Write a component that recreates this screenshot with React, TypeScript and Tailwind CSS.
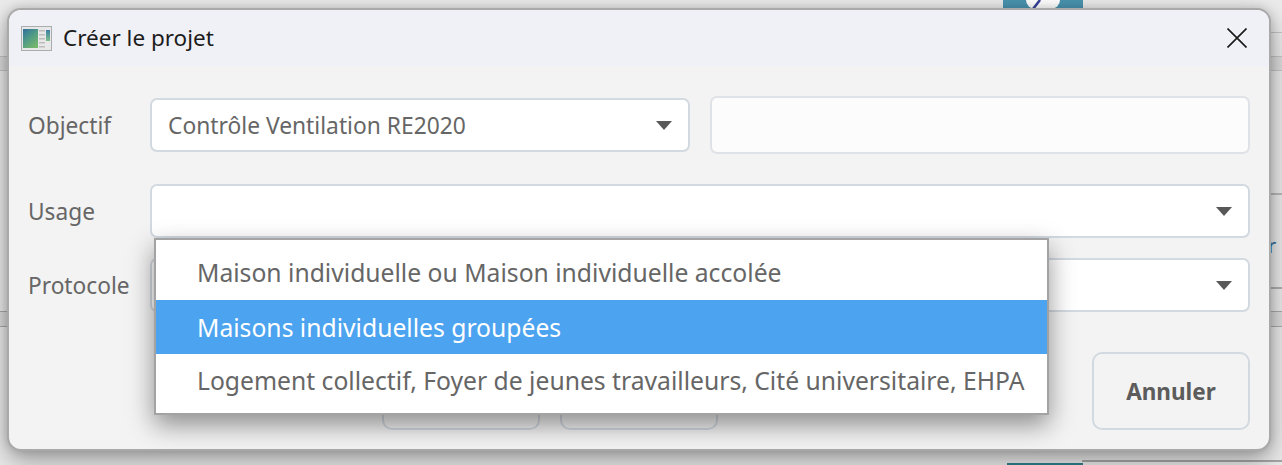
const FONT = "font-['Noto_Sans','Open_Sans',sans-serif]";

const Caret = () => (
  <svg width="16" height="9" viewBox="0 0 16 9" className="shrink-0">
    <path d="M0 0H16L8 9Z" fill="#585858" />
  </svg>
);

const AppIcon = () => (
  <svg width="31" height="25" viewBox="0 0 31 25" className="shrink-0">
    <defs>
      <linearGradient id="pane" x1="0" y1="0" x2="0.7" y2="1">
        <stop offset="0" stopColor="#2f6f9c" />
        <stop offset="0.5" stopColor="#4f9a86" />
        <stop offset="1" stopColor="#74b66c" />
      </linearGradient>
      <linearGradient id="side" x1="0" y1="0" x2="0" y2="1">
        <stop offset="0" stopColor="#3d7fa8" />
        <stop offset="1" stopColor="#7fc08a" />
      </linearGradient>
    </defs>
    <rect x="0.5" y="0.5" width="30" height="24" fill="#e8e8e8" stroke="#a9adad" />
    <rect x="2" y="3" width="15" height="19" fill="url(#pane)" />
    <rect x="18" y="4" width="6" height="1.5" fill="#bdbdbd" />
    <rect x="18" y="8" width="6" height="1.5" fill="#bdbdbd" />
    <rect x="18" y="12" width="6" height="1.5" fill="#bdbdbd" />
    <rect x="18" y="16" width="6" height="1.5" fill="#bdbdbd" />
    <rect x="18" y="20" width="6" height="1.5" fill="#bdbdbd" />
    <rect x="25" y="4" width="4" height="11" fill="url(#side)" />
  </svg>
);

const Label = ({ children }: { children: string }) => (
  <span className="w-[122px] shrink-0 pt-[2px] text-[22.7px] leading-none text-[#666]">{children}</span>
);

const menuItems = [
  "Maison individuelle ou Maison individuelle accolée",
  "Maisons individuelles groupées",
  "Logement collectif, Foyer de jeunes travailleurs, Cité universitaire, EHPA",
];

export default function App() {
  return (
    <div className={`relative h-[465px] w-[1282px] overflow-hidden bg-[#ebebeb] pl-[7px] pt-[8px] ${FONT}`}>
      {/* app behind the dialog */}
      <div className="absolute left-0 top-[56px] h-[15px] w-full border-y border-[#c4c5c4] bg-[#00000010]" />
      <div className="absolute left-0 top-[311px] h-[16px] w-full border-y border-[#a9aaa9] bg-[#00000010]" />
      <div className="absolute right-0 top-[32px] h-px w-[12px] bg-[#c4c5c8]" />
      <div className="absolute right-0 top-[193px] h-[2px] w-[12px] bg-[#b8b9bb]" />
      <div className="absolute right-0 top-[287px] h-[2px] w-[12px] bg-[#aeafb1]" />
      <div className="absolute right-0 top-[460px] h-[2px] w-[200px] bg-[#a5a6a6]" />
      <span className="absolute left-[1268px] top-[236px] text-[20px] leading-none text-[#2f6f9c]">r</span>
      <div className="absolute left-[1003px] top-0 flex h-[9px] w-[80px] justify-center bg-[#4a94b0]">
        <div className="relative h-[9px] w-[34px] rounded-b-full bg-white">
          <svg width="34" height="9" viewBox="0 0 34 9" className="absolute inset-0">
            <path d="M14 0L7 9" stroke="#35419a" strokeWidth="2.5" />
          </svg>
        </div>
      </div>
      <div className="absolute bottom-0 left-[1007px] h-[2px] w-[76px] bg-[#2f7f8c]" />

      <div className="relative flex h-[443px] w-[1264px] flex-col overflow-hidden rounded-[14px] border-2 border-[#a9a9a9] bg-[#f3f3f3] shadow-[0_0_10px_rgba(0,0,0,0.16),0_10px_26px_rgba(0,0,0,0.34)]">
        <div className="flex h-[56px] shrink-0 items-center bg-[#f0f1f6] pl-[12px] pr-[22px]">
          <AppIcon />
          <span className="ml-[11px] pt-[1px] text-[22.5px] leading-none text-[#1c1c1c]">Créer le projet</span>
          <svg width="20" height="20" viewBox="0 0 20 20" className="mb-[1px] ml-auto">
            <path d="M0.5 0.5L19.5 19.5M19.5 0.5L0.5 19.5" stroke="#1c1c1c" strokeWidth="1.7" />
          </svg>
        </div>

        <div className="flex flex-1 flex-col px-[19px]">
          <div className="mt-[30px] flex items-center">
            <Label>Objectif</Label>
            <div className="flex h-[54px] w-[540px] items-center rounded-[7px] border-2 border-[#d3d9e1] bg-white px-[16px] pt-[2px] text-[22.8px] text-[#666]">
              <span>Contrôle Ventilation RE2020</span>
              <span className="ml-auto pb-[2px]"><Caret /></span>
            </div>
            <div className="ml-[20px] h-[58px] flex-1 rounded-[7px] border-2 border-[#dfe2e6] bg-[#fcfcfc]" />
          </div>

          <div className="mt-[30px] flex items-center">
            <Label>Usage</Label>
            <div className="flex h-[54px] flex-1 items-center justify-end rounded-[7px] border-2 border-[#d3d9e1] bg-white pr-[16px]">
              <Caret />
            </div>
          </div>

          <div className="mt-[20px] flex items-center">
            <Label>Protocole</Label>
            <div className="flex h-[54px] flex-1 items-center justify-end rounded-[7px] border-2 border-[#d3d9e1] bg-white pr-[16px]">
              <Caret />
            </div>
          </div>

          <div className="mt-[40px] flex h-[78px] items-stretch pl-[354px]">
            <div className="w-[158px] rounded-[10px] border-2 border-[#d3d9e1]" />
            <div className="ml-[20px] w-[158px] rounded-[10px] border-2 border-[#d3d9e1]" />
            <div className="ml-auto flex w-[158px] items-center justify-center rounded-[10px] border-2 border-[#d3d9e1] pt-[1px] text-[22.5px] font-bold text-[#5c5c5c]">
              Annuler
            </div>
          </div>
        </div>
      </div>

      {/* open dropdown of Usage */}
      <div className="absolute left-[154px] top-[238px] flex h-[177px] w-[895px] flex-col border-2 border-[#a3a3a3] bg-white shadow-[0_10px_24px_rgba(0,0,0,0.42)]">
        <div className="flex h-[60px] items-center pl-[41px] pt-[6px] text-[24.7px] text-[#666]">{menuItems[0]}</div>
        <div className="flex h-[54px] items-center bg-[#4ca3f0] pl-[41px] pt-[1px] text-[24.7px] text-white">{menuItems[1]}</div>
        <div className="flex h-[59px] items-center pb-[6px] pl-[41px] text-[24.7px] text-[#666]">{menuItems[2]}</div>
      </div>
    </div>
  );
}
